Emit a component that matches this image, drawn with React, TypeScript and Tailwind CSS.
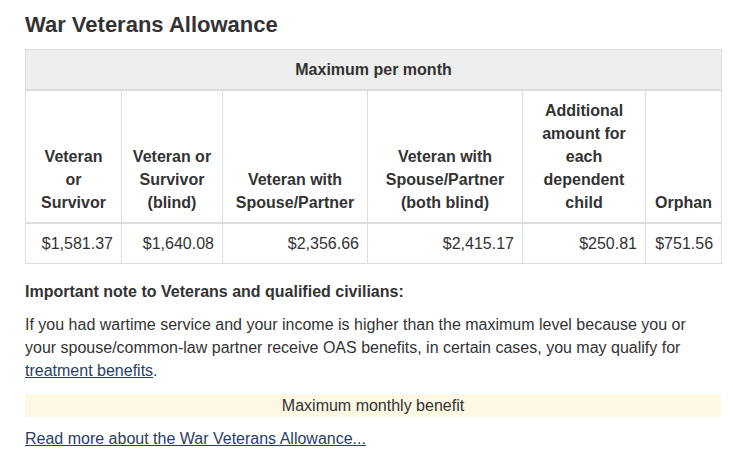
import { Fragment } from 'react';

export default function App() {
  const heads = [
    ['Veteran', 'or', 'Survivor'],
    ['Veteran or Survivor (blind)'],
    ['Veteran with Spouse/Partner'],
    ['Veteran with Spouse/Partner (both blind)'],
    ['Additional amount for each dependent child'],
    ['Orphan'],
  ];
  const values = ['$1,581.37', '$1,640.08', '$2,356.66', '$2,415.17', '$250.81', '$751.56'];
  const widths = ['w-[96px]', 'w-[101px]', 'w-[145px]', 'w-[155px]', 'w-[123px]', 'w-[76px]'];

  return (
    <div className="min-h-screen bg-white pl-[25px] pt-[10px] font-['Liberation_Sans',Arial,sans-serif] text-[16px] leading-[23px] text-[#333]">
      <h1 className="text-[22px] leading-[30px] font-bold text-[#333]">War Veterans Allowance</h1>

      {/* Rates table */}
      <table className="mt-[9px] w-[696px] table-fixed border-collapse">
        <colgroup>
          {widths.map((w) => (
            <col key={w} className={w} />
          ))}
        </colgroup>
        <thead>
          <tr className="bg-[#eee]">
            <th colSpan={6} className="border border-[#ddd] border-b-2 px-2 py-2 text-center font-bold">
              Maximum per month
            </th>
          </tr>
          <tr>
            {heads.map((h, i) => (
              <th key={i} className="border border-[#ddd] border-b-2 px-2 py-2 align-bottom text-center font-bold">
                {h.map((line, j) => (
                  <Fragment key={j}>
                    {j > 0 && <br />}
                    {line}
                  </Fragment>
                ))}
              </th>
            ))}
          </tr>
        </thead>
        <tbody>
          <tr>
            {values.map((v) => (
              <td key={v} className="border border-[#ddd] px-2 py-2 text-right">
                {v}
              </td>
            ))}
          </tr>
        </tbody>
      </table>

      <div className="w-[696px]">
        <p className="mt-[16px] font-bold">Important note to Veterans and qualified civilians:</p>
        <p className="mt-[10px]">
          If you had wartime service and your income is higher than the maximum level because you or your spouse/common-law partner receive OAS benefits, in certain cases, you may qualify for{' '}
          <a href="#" className="text-[#284162] underline">treatment benefits</a>.
        </p>
        <div className="mt-[12px] bg-[#fcf8e3] text-center">Maximum monthly benefit</div>
        <p className="mt-[10px]">
          <a href="#" className="text-[#284162] underline">Read more about the War Veterans Allowance...</a>
        </p>
      </div>
    </div>
  );
}
